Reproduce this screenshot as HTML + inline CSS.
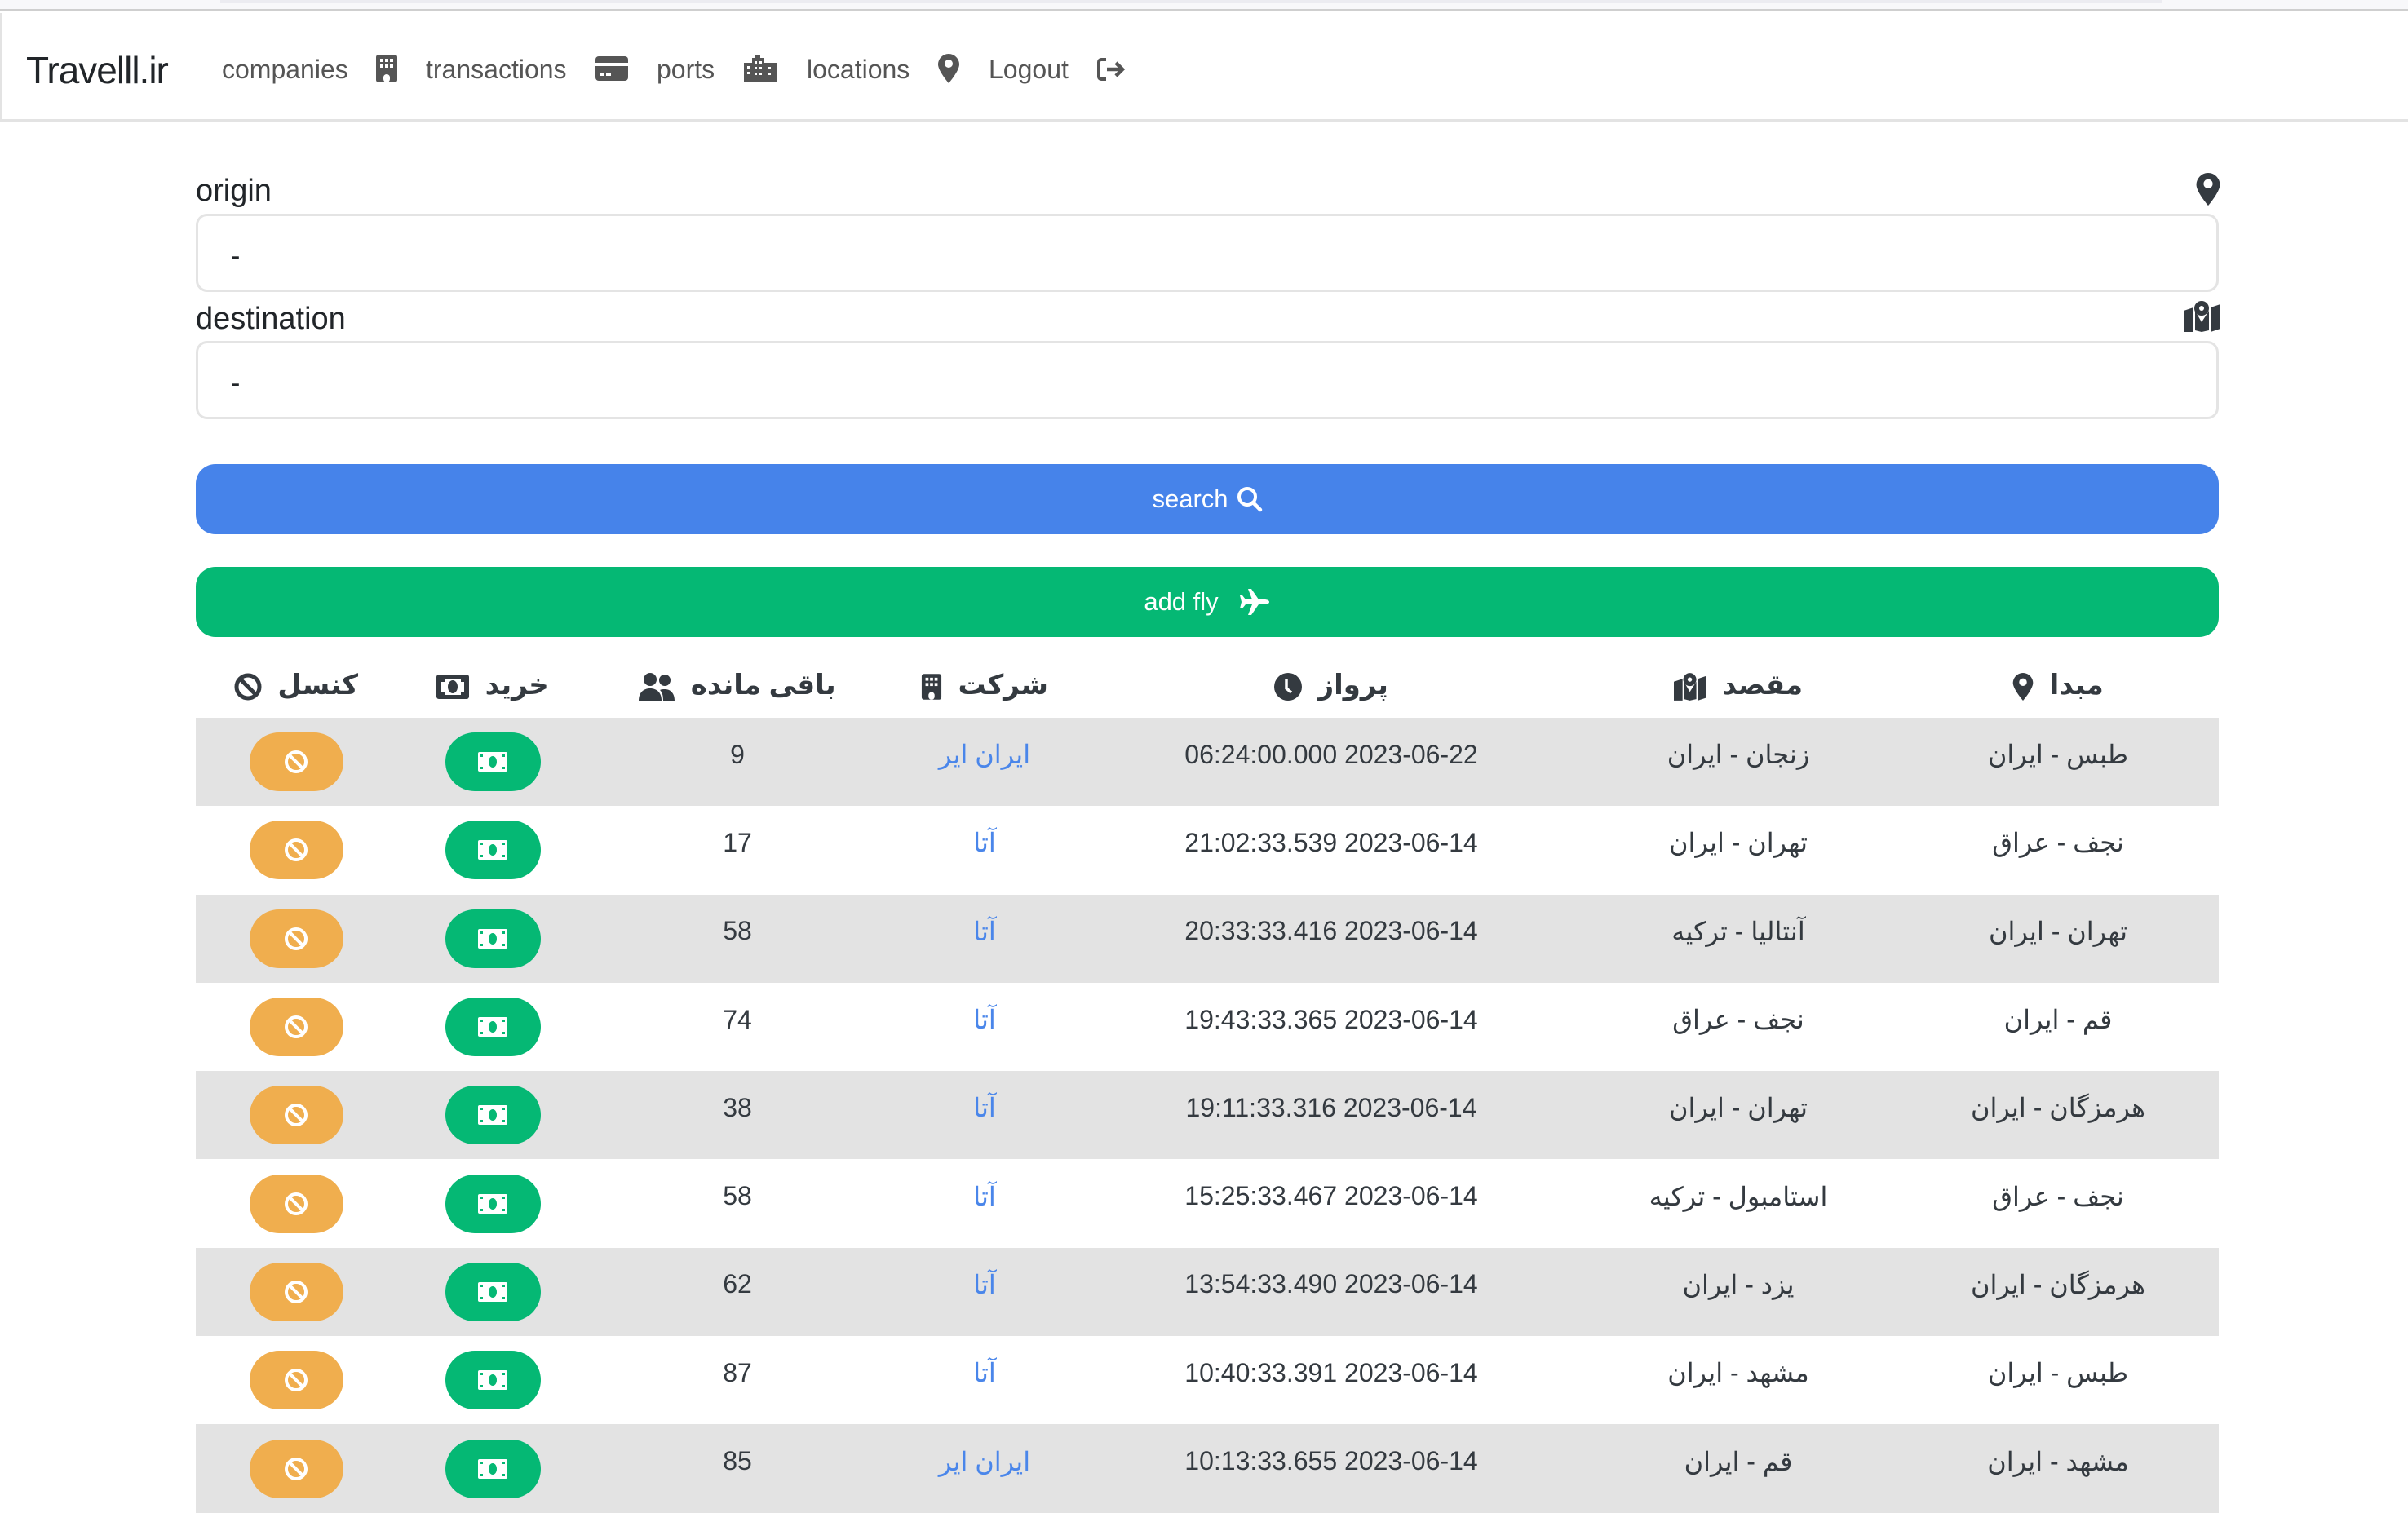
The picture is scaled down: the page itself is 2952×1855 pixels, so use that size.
<!DOCTYPE html>
<html><head><meta charset="utf-8">
<style>
*{box-sizing:border-box;margin:0;padding:0}
body{width:2952px;height:1827px;overflow:hidden;background:#fff;font-family:"Liberation Sans","Noto Sans CJK SC",sans-serif;color:#343a40;position:relative}
.topstrip{position:absolute;left:0;top:0;width:2952px;height:14px;background:#f8f8fa;border-bottom:3px solid #cfcfcf}
.tab{position:absolute;left:270px;top:0;width:2380px;height:4px;background:#ececf1}
.nav{position:absolute;left:0;top:16px;width:2952px;height:133px;border-left:2px solid #e3e3e3;border-bottom:3px solid #e3e3e3}
.brand{position:absolute;left:30px;top:43px;font-size:46px;color:#212529;letter-spacing:-1px}
.nl{position:absolute;top:51px;font-size:32px;color:#555}
.ni{position:absolute;top:52px}
.lbl{position:absolute;left:240px;font-size:38px;color:#212529}
.inp{position:absolute;left:240px;width:2480px;height:96px;border:3px solid #e4e4e4;border-radius:14px;font-size:34px;padding:30px 0 0 40px;color:#212529}
.btn{position:absolute;left:240px;width:2480px;height:86px;border-radius:24px;color:#fff;font-size:31px;display:flex;align-items:center;justify-content:center;gap:10px}
table{position:absolute;left:240px;top:800px;width:2480px;border-collapse:collapse;table-layout:fixed;direction:rtl}
th{height:80px;font-size:34px;font-weight:bold;text-align:center;vertical-align:middle;font-family:"Liberation Sans","DejaVu Sans",sans-serif}
th svg{vertical-align:middle;margin-right:10px}
td{height:108.3px;font-size:32px;text-align:center;vertical-align:middle;padding-bottom:18px}
td.b{padding-bottom:0}
tbody tr:nth-child(odd){background:#e3e3e3}
.co{color:#4a86ea}
.pill{display:inline-flex;align-items:center;justify-content:center;width:115px;height:72px;border-radius:36px/36px}
.or{background:#f0ae4e}.gr{background:#05b874;width:117px}
</style></head><body>
<div class="topstrip"><div class="tab"></div></div>
<div class="nav">
<div class="brand">Travelll.ir</div>
<div class="nl" style="left:270px">companies</div>
<svg class="ni" style="left:458px;top:51px" width="28" height="34" viewBox="0 0 28 34"><rect x="1" y="0" width="26" height="34" rx="3" fill="#555"/><g fill="#fff"><rect x="6" y="5" width="4" height="4"/><rect x="12" y="5" width="4" height="4"/><rect x="18" y="5" width="4" height="4"/><rect x="6" y="12" width="4" height="4"/><rect x="12" y="12" width="4" height="4"/><rect x="18" y="12" width="4" height="4"/><rect x="10" y="24" width="8" height="10" rx="4"/></g></svg>
<div class="nl" style="left:520px">transactions</div>
<svg class="ni" style="left:728px;top:53px" width="40" height="30" viewBox="0 0 40 30"><rect x="0" y="0" width="40" height="30" rx="4" fill="#555"/><rect x="0" y="8" width="40" height="4" fill="#fff"/><rect x="6" y="21" width="5" height="3" fill="#fff"/><rect x="13" y="21" width="6" height="3" fill="#fff"/></svg>
<div class="nl" style="left:803px">ports</div>
<svg class="ni" style="left:908px;top:51px" width="44" height="34" viewBox="0 0 44 34"><path d="M2 10h10V4h4V0h6v4h4v6h16v24H2z" fill="#555"/><g fill="#fff"><rect x="6" y="14" width="3" height="3"/><rect x="6" y="21" width="3" height="3"/><rect x="15" y="8" width="3" height="3"/><rect x="21" y="8" width="3" height="3"/><rect x="15" y="15" width="3" height="3"/><rect x="21" y="15" width="3" height="3"/><rect x="15" y="22" width="3" height="3"/><rect x="21" y="22" width="3" height="3"/><rect x="32" y="15" width="3" height="3"/><rect x="32" y="22" width="3" height="3"/></g></svg>
<div class="nl" style="left:987px">locations</div>
<svg class="ni" style="left:1148px;top:50px" width="26" height="36" viewBox="0 0 26 36"><path d="M13 0C6 0 0 6 0 13c0 8 13 23 13 23s13-15 13-23C26 6 20 0 13 0z" fill="#555"/><circle cx="13" cy="12" r="5" fill="#fff"/></svg>
<div class="nl" style="left:1210px">Logout</div>
<svg class="ni" style="left:1343px;top:54px" width="36" height="30" viewBox="0 0 36 30"><path d="M11 3H5a3 3 0 0 0-3 3v18a3 3 0 0 0 3 3h6" fill="none" stroke="#555" stroke-width="4"/><path d="M12 15h18M23 7l8 8-8 8" fill="none" stroke="#555" stroke-width="4.5"/></svg>
</div>

<div class="lbl" style="top:213px">origin</div>
<svg style="position:absolute;left:2692px;top:212px" width="30" height="40" viewBox="0 0 26 36"><path d="M13 0C6 0 0 6 0 13c0 8 13 23 13 23s13-15 13-23C26 6 20 0 13 0z" fill="#343a40"/><circle cx="13" cy="12" r="5" fill="#fff"/></svg>
<div class="inp" style="top:262px">-</div>
<div class="lbl" style="top:370px">destination</div>
<svg style="position:absolute;left:2677px;top:369px" width="45" height="38" viewBox="0 0 45 38"><path d="M0 12l12-4v30L0 38zM33 8l12-4v30l-12 4zM14 12v24l8 2 9-2V12l-9 14z" fill="#343a40"/><circle cx="22" cy="9" r="9" fill="#343a40"/><circle cx="22" cy="9" r="3" fill="#fff"/></svg>
<div class="inp" style="top:418px">-</div>

<div class="btn" style="top:569px;background:#4683ea">search <svg width="32" height="32" viewBox="0 0 32 32"><circle cx="13" cy="13" r="10" fill="none" stroke="#fff" stroke-width="4"/><path d="M20 20l9 9" stroke="#fff" stroke-width="4.5" stroke-linecap="round"/></svg></div>
<div class="btn" style="top:695px;background:#05b874;gap:26px">add fly <svg width="38" height="32" viewBox="0 0 38 32"><path d="M36 16c0-2-3-3-6-3h-7L14 0h-4l5 13H7L3 8H0l2 8-2 8h3l4-5h8l-5 13h4l9-13h7c3 0 6-1 6-3z" fill="#fff"/></svg></div>

<table>
<colgroup><col style="width:394px"><col style="width:390px"><col style="width:608px"><col style="width:242px"><col style="width:364px"><col style="width:236px"><col style="width:246px"></colgroup>
<thead><tr>
<th>مبدا <svg width="26" height="34" viewBox="0 0 26 36"><path d="M13 0C6 0 0 6 0 13c0 8 13 23 13 23s13-15 13-23C26 6 20 0 13 0z" fill="#343a40"/><circle cx="13" cy="12" r="5" fill="#fff"/></svg></th>
<th>مقصد <svg width="40" height="34" viewBox="0 0 45 38"><path d="M0 12l12-4v30L0 38zM33 8l12-4v30l-12 4zM14 12v24l8 2 9-2V12l-9 14z" fill="#343a40"/><circle cx="22" cy="9" r="9" fill="#343a40"/><circle cx="22" cy="9" r="3" fill="#fff"/></svg></th>
<th>پرواز <svg width="34" height="34" viewBox="0 0 34 34"><circle cx="17" cy="17" r="17" fill="#343a40"/><path d="M15 7v12l6 5" fill="none" stroke="#fff" stroke-width="3.5"/></svg></th>
<th>شرکت <svg width="26" height="34" viewBox="0 0 28 34"><rect x="1" y="0" width="26" height="34" rx="3" fill="#343a40"/><g fill="#fff"><rect x="6" y="5" width="4" height="4"/><rect x="12" y="5" width="4" height="4"/><rect x="18" y="5" width="4" height="4"/><rect x="6" y="12" width="4" height="4"/><rect x="12" y="12" width="4" height="4"/><rect x="18" y="12" width="4" height="4"/><rect x="10" y="24" width="8" height="10" rx="4"/></g></svg></th>
<th>باقی مانده <svg width="44" height="34" viewBox="0 0 44 34"><circle cx="14" cy="8" r="8" fill="#343a40"/><path d="M0 34c0-10 6-15 14-15s14 5 14 15z" fill="#343a40"/><circle cx="32" cy="9" r="7" fill="#343a40"/><path d="M30 34c0-8-2-11-4-13 2-1 4-1 6-1 7 0 12 5 12 14z" fill="#343a40"/></svg></th>
<th>خرید <svg width="40" height="30" viewBox="0 0 40 30"><rect x="0" y="0" width="40" height="30" rx="3" fill="#343a40"/><rect x="6" y="5" width="28" height="20" fill="#fff"/><ellipse cx="20" cy="15" rx="6" ry="8" fill="#343a40"/><path d="M6 5h4v4h-4zM30 5h4v4h-4zM6 21h4v4h-4zM30 21h4v4h-4z" fill="#343a40"/></svg></th>
<th>کنسل <svg width="34" height="34" viewBox="0 0 34 34"><circle cx="17" cy="17" r="14" fill="none" stroke="#343a40" stroke-width="5"/><path d="M8 8l18 18" stroke="#343a40" stroke-width="5"/></svg></th>
</tr></thead>
<tbody>
<tr><td>طبس - ایران</td><td>زنجان - ایران</td><td><span dir="ltr">06:24:00.000 2023-06-22</span></td><td class="co">ایران ایر</td><td>9</td><td class="b"><span class="pill gr"><svg width="36" height="24" viewBox="0 0 36 24"><rect width="36" height="24" rx="2" fill="#fff"/><ellipse cx="18" cy="12" rx="5" ry="7" fill="#05b874"/><path d="M3 3h3v3H3zM30 3h3v3h-3zM3 18h3v3H3zM30 18h3v3h-3z" fill="#05b874"/></svg></span></td><td class="b"><span class="pill or"><svg width="32" height="32" viewBox="0 0 32 32"><circle cx="16" cy="16" r="12" fill="none" stroke="#fff" stroke-width="4"/><path d="M8 8l16 16" stroke="#fff" stroke-width="4"/></svg></span></td></tr>
<tr><td>نجف - عراق</td><td>تهران - ایران</td><td><span dir="ltr">21:02:33.539 2023-06-14</span></td><td class="co">آتا</td><td>17</td><td class="b"><span class="pill gr"><svg width="36" height="24" viewBox="0 0 36 24"><rect width="36" height="24" rx="2" fill="#fff"/><ellipse cx="18" cy="12" rx="5" ry="7" fill="#05b874"/><path d="M3 3h3v3H3zM30 3h3v3h-3zM3 18h3v3H3zM30 18h3v3h-3z" fill="#05b874"/></svg></span></td><td class="b"><span class="pill or"><svg width="32" height="32" viewBox="0 0 32 32"><circle cx="16" cy="16" r="12" fill="none" stroke="#fff" stroke-width="4"/><path d="M8 8l16 16" stroke="#fff" stroke-width="4"/></svg></span></td></tr>
<tr><td>تهران - ایران</td><td>آنتالیا - ترکیه</td><td><span dir="ltr">20:33:33.416 2023-06-14</span></td><td class="co">آتا</td><td>58</td><td class="b"><span class="pill gr"><svg width="36" height="24" viewBox="0 0 36 24"><rect width="36" height="24" rx="2" fill="#fff"/><ellipse cx="18" cy="12" rx="5" ry="7" fill="#05b874"/><path d="M3 3h3v3H3zM30 3h3v3h-3zM3 18h3v3H3zM30 18h3v3h-3z" fill="#05b874"/></svg></span></td><td class="b"><span class="pill or"><svg width="32" height="32" viewBox="0 0 32 32"><circle cx="16" cy="16" r="12" fill="none" stroke="#fff" stroke-width="4"/><path d="M8 8l16 16" stroke="#fff" stroke-width="4"/></svg></span></td></tr>
<tr><td>قم - ایران</td><td>نجف - عراق</td><td><span dir="ltr">19:43:33.365 2023-06-14</span></td><td class="co">آتا</td><td>74</td><td class="b"><span class="pill gr"><svg width="36" height="24" viewBox="0 0 36 24"><rect width="36" height="24" rx="2" fill="#fff"/><ellipse cx="18" cy="12" rx="5" ry="7" fill="#05b874"/><path d="M3 3h3v3H3zM30 3h3v3h-3zM3 18h3v3H3zM30 18h3v3h-3z" fill="#05b874"/></svg></span></td><td class="b"><span class="pill or"><svg width="32" height="32" viewBox="0 0 32 32"><circle cx="16" cy="16" r="12" fill="none" stroke="#fff" stroke-width="4"/><path d="M8 8l16 16" stroke="#fff" stroke-width="4"/></svg></span></td></tr>
<tr><td>هرمزگان - ایران</td><td>تهران - ایران</td><td><span dir="ltr">19:11:33.316 2023-06-14</span></td><td class="co">آتا</td><td>38</td><td class="b"><span class="pill gr"><svg width="36" height="24" viewBox="0 0 36 24"><rect width="36" height="24" rx="2" fill="#fff"/><ellipse cx="18" cy="12" rx="5" ry="7" fill="#05b874"/><path d="M3 3h3v3H3zM30 3h3v3h-3zM3 18h3v3H3zM30 18h3v3h-3z" fill="#05b874"/></svg></span></td><td class="b"><span class="pill or"><svg width="32" height="32" viewBox="0 0 32 32"><circle cx="16" cy="16" r="12" fill="none" stroke="#fff" stroke-width="4"/><path d="M8 8l16 16" stroke="#fff" stroke-width="4"/></svg></span></td></tr>
<tr><td>نجف - عراق</td><td>استامبول - ترکیه</td><td><span dir="ltr">15:25:33.467 2023-06-14</span></td><td class="co">آتا</td><td>58</td><td class="b"><span class="pill gr"><svg width="36" height="24" viewBox="0 0 36 24"><rect width="36" height="24" rx="2" fill="#fff"/><ellipse cx="18" cy="12" rx="5" ry="7" fill="#05b874"/><path d="M3 3h3v3H3zM30 3h3v3h-3zM3 18h3v3H3zM30 18h3v3h-3z" fill="#05b874"/></svg></span></td><td class="b"><span class="pill or"><svg width="32" height="32" viewBox="0 0 32 32"><circle cx="16" cy="16" r="12" fill="none" stroke="#fff" stroke-width="4"/><path d="M8 8l16 16" stroke="#fff" stroke-width="4"/></svg></span></td></tr>
<tr><td>هرمزگان - ایران</td><td>یزد - ایران</td><td><span dir="ltr">13:54:33.490 2023-06-14</span></td><td class="co">آتا</td><td>62</td><td class="b"><span class="pill gr"><svg width="36" height="24" viewBox="0 0 36 24"><rect width="36" height="24" rx="2" fill="#fff"/><ellipse cx="18" cy="12" rx="5" ry="7" fill="#05b874"/><path d="M3 3h3v3H3zM30 3h3v3h-3zM3 18h3v3H3zM30 18h3v3h-3z" fill="#05b874"/></svg></span></td><td class="b"><span class="pill or"><svg width="32" height="32" viewBox="0 0 32 32"><circle cx="16" cy="16" r="12" fill="none" stroke="#fff" stroke-width="4"/><path d="M8 8l16 16" stroke="#fff" stroke-width="4"/></svg></span></td></tr>
<tr><td>طبس - ایران</td><td>مشهد - ایران</td><td><span dir="ltr">10:40:33.391 2023-06-14</span></td><td class="co">آتا</td><td>87</td><td class="b"><span class="pill gr"><svg width="36" height="24" viewBox="0 0 36 24"><rect width="36" height="24" rx="2" fill="#fff"/><ellipse cx="18" cy="12" rx="5" ry="7" fill="#05b874"/><path d="M3 3h3v3H3zM30 3h3v3h-3zM3 18h3v3H3zM30 18h3v3h-3z" fill="#05b874"/></svg></span></td><td class="b"><span class="pill or"><svg width="32" height="32" viewBox="0 0 32 32"><circle cx="16" cy="16" r="12" fill="none" stroke="#fff" stroke-width="4"/><path d="M8 8l16 16" stroke="#fff" stroke-width="4"/></svg></span></td></tr>
<tr><td>مشهد - ایران</td><td>قم - ایران</td><td><span dir="ltr">10:13:33.655 2023-06-14</span></td><td class="co">ایران ایر</td><td>85</td><td class="b"><span class="pill gr"><svg width="36" height="24" viewBox="0 0 36 24"><rect width="36" height="24" rx="2" fill="#fff"/><ellipse cx="18" cy="12" rx="5" ry="7" fill="#05b874"/><path d="M3 3h3v3H3zM30 3h3v3h-3zM3 18h3v3H3zM30 18h3v3h-3z" fill="#05b874"/></svg></span></td><td class="b"><span class="pill or"><svg width="32" height="32" viewBox="0 0 32 32"><circle cx="16" cy="16" r="12" fill="none" stroke="#fff" stroke-width="4"/><path d="M8 8l16 16" stroke="#fff" stroke-width="4"/></svg></span></td></tr>
</tbody></table>
</body></html>
